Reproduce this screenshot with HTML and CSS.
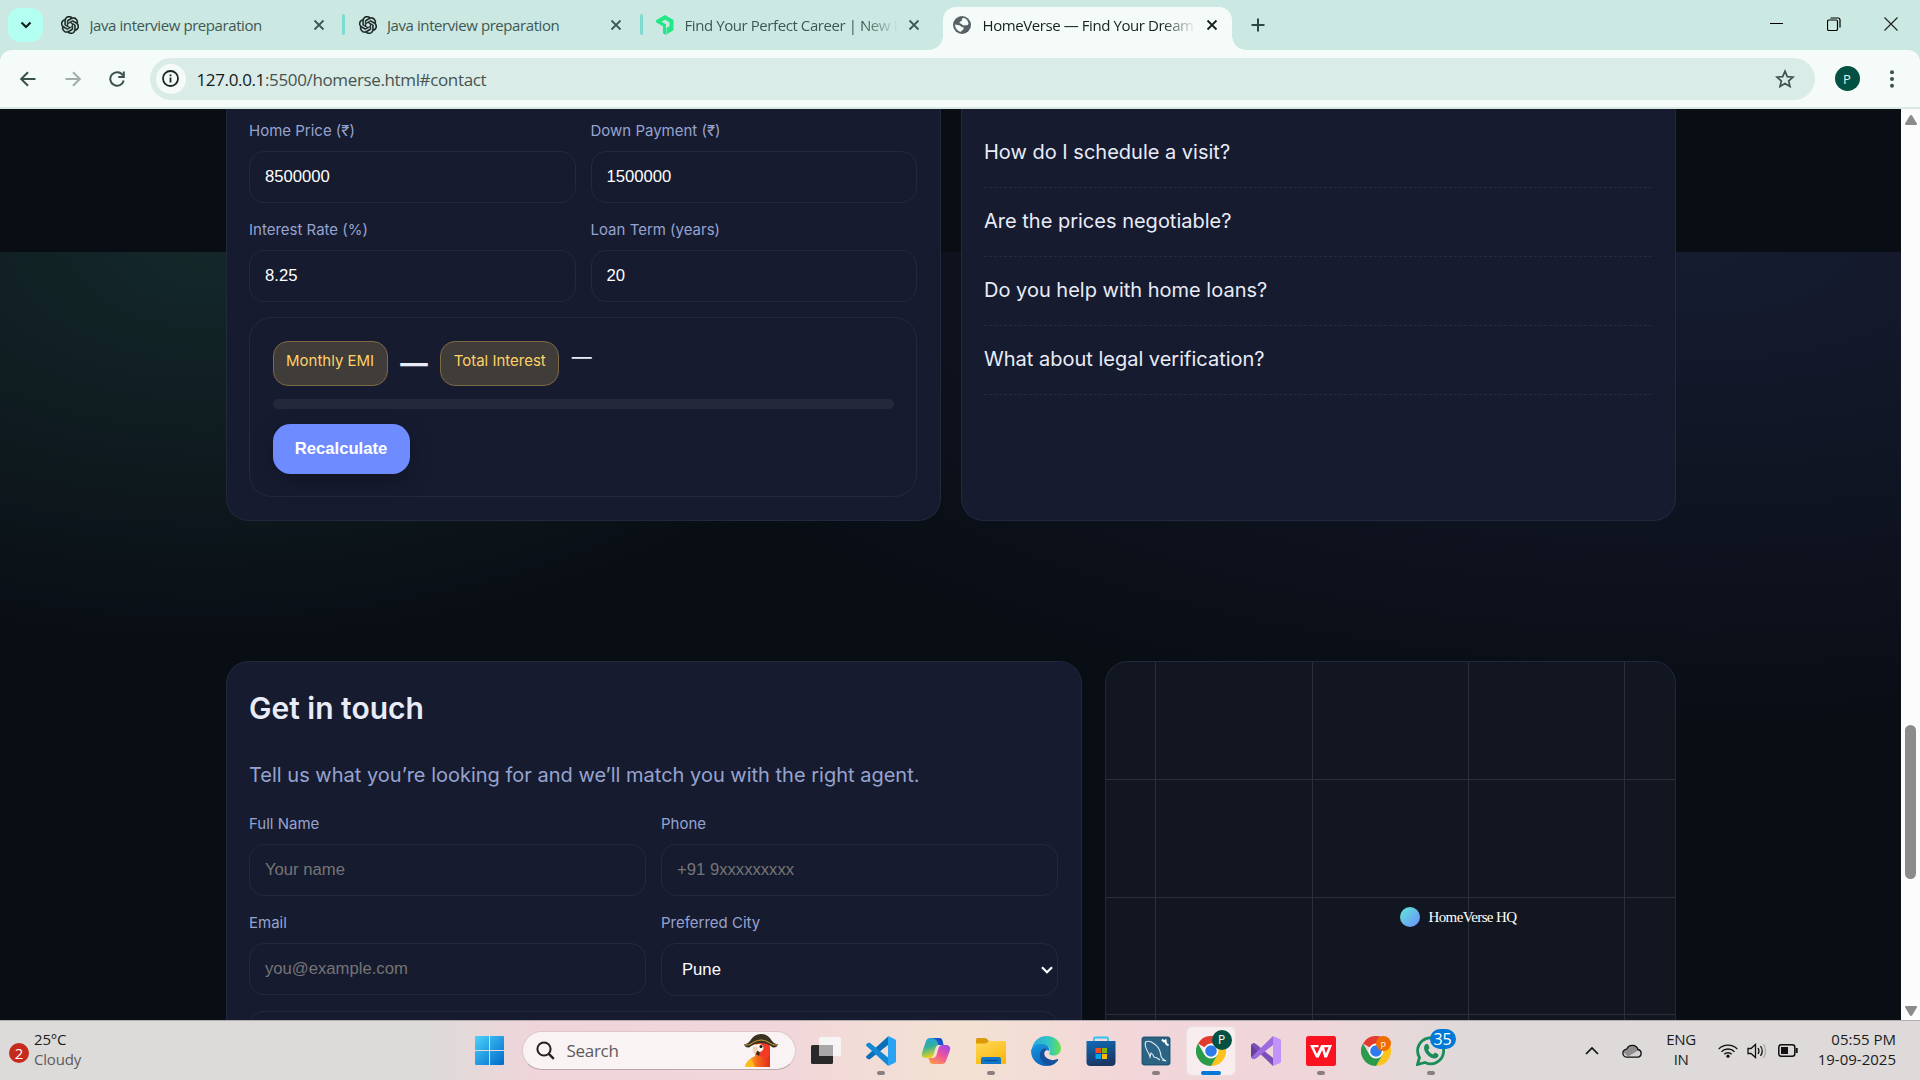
FILE: index.html
```html
<!DOCTYPE html>
<html lang="en">
<head>
<meta charset="utf-8">
<title>HomeVerse — Find Your Dream Home</title>
<link rel="stylesheet" href="styles.css">
</head>
<body>
<svg class="defs" width="0" height="0" aria-hidden="true">
  <defs>
    <symbol id="knot" viewBox="0 0 24 24"><path fill="#111c1b" stroke="#111c1b" stroke-width=".5" d="M22.28 9.82a5.98 5.98 0 0 0-.52-4.91 6.05 6.05 0 0 0-6.51-2.9A6.07 6.07 0 0 0 4.98 4.18a5.98 5.98 0 0 0-4 2.9 6.05 6.05 0 0 0 .74 7.1 5.98 5.98 0 0 0 .51 4.91 6.05 6.05 0 0 0 6.52 2.9A5.98 5.98 0 0 0 13.26 24a6.06 6.06 0 0 0 5.77-4.21 5.99 5.99 0 0 0 4-2.9 6.06 6.06 0 0 0-.75-7.07zm-9.02 12.61a4.48 4.48 0 0 1-2.88-1.04l.14-.08 4.78-2.76a.8.8 0 0 0 .39-.68v-6.74l2.02 1.17a.07.07 0 0 1 .04.05v5.58a4.5 4.5 0 0 1-4.49 4.5zM3.6 18.3a4.47 4.47 0 0 1-.54-3.01l.14.08 4.78 2.76a.77.77 0 0 0 .78 0l5.84-3.37v2.33a.08.08 0 0 1-.03.06L9.74 19.95a4.5 4.5 0 0 1-6.14-1.65zM2.34 7.9a4.49 4.49 0 0 1 2.37-1.98v5.68a.77.77 0 0 0 .39.68l5.81 3.35-2.02 1.17a.08.08 0 0 1-.07 0l-4.83-2.79A4.5 4.5 0 0 1 2.34 7.87zm16.6 3.86-5.84-3.39 2.02-1.16a.08.08 0 0 1 .07 0l4.83 2.79a4.49 4.49 0 0 1-.68 8.1v-5.67a.79.79 0 0 0-.4-.67zm2.01-3.03-.14-.08-4.77-2.78a.78.78 0 0 0-.79 0L9.41 9.23V6.9a.07.07 0 0 1 .03-.06l4.83-2.79a4.5 4.5 0 0 1 6.68 4.66zM8.31 12.86l-2.02-1.16a.08.08 0 0 1-.04-.06V6.07a4.5 4.5 0 0 1 7.38-3.45l-.14.08L8.7 5.46a.8.8 0 0 0-.39.68zm1.09-2.36 2.61-1.5 2.6 1.5v3l-2.6 1.5-2.6-1.5z"/></symbol>
    <symbol id="close" viewBox="0 0 12 12"><path d="M1.5 1.5l9 9M10.5 1.5l-9 9" fill="none" stroke="currentColor" stroke-width="1.8"/></symbol>
    <symbol id="chrome" viewBox="0 0 30 30">
      <path fill="#e33b2e" d="M15 15 2 7.5A15 15 0 0 1 28 7.5H15z"/>
      <path fill="#fcc31e" d="M15 7.5h13A15 15 0 0 1 15 30l6.5-11.2z"/>
      <path fill="#2a9b48" d="M2 7.5A15 15 0 0 0 15 30l6.5-11.2-13 0z"/>
      <circle cx="15" cy="15" r="7.4" fill="#fff"/><circle cx="15" cy="15" r="5.8" fill="#2f7bed"/>
    </symbol>
  </defs>
</svg>

<div class="window">
  <header class="tabstrip">
    <button class="tab-search"><svg width="12" height="8" viewBox="0 0 12 8"><path d="M1.5 1.5 6 6l4.500-4.500" fill="none" stroke="#10201d" stroke-width="2.200"/></svg></button>
    <div class="tabs">
      <div class="tab"><svg class="fav" viewBox="0 0 24 24"><use href="#knot"/></svg><span class="tab-title">Java interview preparation</span><svg class="x"><use href="#close"/></svg></div>
      <div class="tab split"><svg class="fav" viewBox="0 0 24 24"><use href="#knot"/></svg><span class="tab-title">Java interview preparation</span><svg class="x"><use href="#close"/></svg></div>
      <div class="tab split"><svg class="fav green" viewBox="0 0 18 20"><path d="M0 5.200 9 0l8.500 5v10L10.500 19.500V13l3-1.800V7.300L9 4.700 5.500 6.700 10 9.300V20L7 18.200v-7L0 7.200z" fill="#1fe884"/></svg><span class="tab-title fade">Find Your Perfect Career | New Era</span><svg class="x"><use href="#close"/></svg></div>
      <div class="tab active"><svg class="fav" viewBox="0 0 18 18"><circle cx="9" cy="9" r="9" fill="#5a6166"/><path d="M9.500 2c3-.4 6 2.500 6 6-1 2-3 1-4.500 1.500S9.500 8 7.500 7.500 7 5.500 8.500 5z" fill="#f4fbf9"/><path d="M2 8.500c2 .5 4 .2 5.500 1.500s2 1 3 1.500-.5 2.500-1.500 3-.5 1.500-1.500 1.300C4.500 15 2 12 2 8.500z" fill="#f4fbf9"/></svg><span class="tab-title fade">HomeVerse — Find Your Dream Home</span><svg class="x"><use href="#close"/></svg></div>
    </div>
    <svg class="plus" width="14" height="14" viewBox="0 0 14 14"><path d="M7 .5v13M.5 7h13" stroke="#2f4743" stroke-width="2"/></svg>
    <div class="controls">
      <svg width="14" height="14" viewBox="0 0 14 14"><path d="M0 6.500h13" stroke="#000" stroke-width="1"/></svg>
      <svg width="14" height="14" viewBox="0 0 14 14"><rect x=".5" y="3" width="10" height="10.500" rx="1.500" fill="none" stroke="#000" stroke-width="1.200"/><path d="M3.500 1h7.500q2 0 2 2v7.500" fill="none" stroke="#000" stroke-width="1.200"/></svg>
      <svg width="14" height="14" viewBox="0 0 14 14"><path d="M.5.5l13 13M13.500.5l-13 13" stroke="#222" stroke-width="1.200"/></svg>
    </div>
  </header>

  <nav class="toolbar">
    <svg class="nav" viewBox="0 0 16 16"><path d="M15.500 8H1.500M8 1.200 1.200 8 8 14.800" fill="none" stroke="#39524d" stroke-width="2"/></svg>
    <svg class="nav" viewBox="0 0 16 16"><path d="M.5 8h14M8 1.200 14.800 8 8 14.800" fill="none" stroke="#a3adab" stroke-width="2"/></svg>
    <svg class="nav" viewBox="0 0 16 16"><path d="M13.800 4.300A6.800 6.800 0 1 0 14.700 9.500M14.800 .5v5.500H9.300" fill="none" stroke="#39524d" stroke-width="2"/></svg>
    <div class="omnibox">
      <span class="info"><svg width="17" height="17" viewBox="0 0 17 17"><circle cx="8.500" cy="8.500" r="7.500" fill="none" stroke="#1b2625" stroke-width="1.800"/><path d="M8.500 7.500v5M8.500 4.500v1.700" stroke="#1b2625" stroke-width="1.800"/></svg></span>
      <span class="url"><b>127.0.0.1</b>:5500/homerse.html#contact</span>
      <svg class="star" width="20" height="20" viewBox="0 0 20 20"><path d="M10 2.200l2.300 5.400 5.800.5-4.400 3.800 1.300 5.700-5-3-5 3 1.300-5.700L1.900 8.100l5.800-.5z" fill="none" stroke="#44524f" stroke-width="1.700"/></svg>
    </div>
    <span class="avatar">P</span>
    <svg class="dots" width="4" height="18" viewBox="0 0 4 18"><g fill="#39524d"><circle cx="2" cy="2.200" r="2"/><circle cx="2" cy="9" r="2"/><circle cx="2" cy="15.800" r="2"/></g></svg>
  </nav>

  <div class="viewport">
    <main class="page">
      <section class="row halves">
        <div class="card cut-top">
          <div class="fields">
            <label class="field"><span>Home Price (₹)</span><input value="8500000"></label>
            <label class="field"><span>Down Payment (₹)</span><input value="1500000"></label>
            <label class="field"><span>Interest Rate (%)</span><input value="8.25"></label>
            <label class="field"><span>Loan Term (years)</span><input value="20"></label>
          </div>
          <div class="emi">
            <div class="emi-row"><span class="badge">Monthly EMI</span><strong>—</strong><span class="badge">Total Interest</span><span class="dash">—</span></div>
            <div class="bar"></div>
            <button class="btn">Recalculate</button>
          </div>
        </div>
        <div class="card cut-top faq">
          <div class="question">How do I schedule a visit?</div>
          <div class="question">Are the prices negotiable?</div>
          <div class="question">Do you help with home loans?</div>
          <div class="question">What about legal verification?</div>
        </div>
      </section>
      <section class="row contact">
        <div class="card touch">
          <h2>Get in touch</h2>
          <p>Tell us what you’re looking for and we’ll match you with the right agent.</p>
          <div class="fields">
            <label class="field"><span>Full Name</span><input placeholder="Your name"></label>
            <label class="field"><span>Phone</span><input placeholder="+91 9xxxxxxxxx"></label>
            <label class="field"><span>Email</span><input placeholder="you@example.com"></label>
            <div class="field"><span>Preferred City</span><div class="select">Pune<svg width="12" height="8" viewBox="0 0 12 8"><path d="M1 1.200 6 6.200l5-5" fill="none" stroke="#fff" stroke-width="2.200"/></svg></div></div>
          </div>
          <div class="message"></div>
        </div>
        <div class="card map"><div class="pin"><i></i><span>HomeVerse HQ</span></div></div>
      </section>
    </main>
    <aside class="scrollbar">
      <svg width="12" height="10" viewBox="0 0 12 10"><path d="M6 0q.8 0 1.200.8L12 8.800q0 1.200-1 1.200H1q-1 0-1-1.200L4.800.8Q5.200 0 6 0z" fill="#8b8b8b"/></svg>
      <div class="thumb"></div>
      <svg width="12" height="10" viewBox="0 0 12 10"><path d="M6 10q.8 0 1.200-.8L12 1.200Q12 0 11 0H1Q0 0 0 1.200l4.800 8Q5.200 10 6 10z" fill="#8b8b8b"/></svg>
    </aside>
  </div>

  <footer class="taskbar">
    <div class="weather"><span class="count">2</span><div><b>25°C</b><br>Cloudy</div></div>
    <div class="apps">
      <svg class="start" width="29" height="29" viewBox="0 0 29 29"><defs><linearGradient id="w" x2="1" y2="1"><stop stop-color="#4cd2fb"/><stop offset="1" stop-color="#0069ca"/></linearGradient></defs><path fill="url(#w)" d="M1 0h13v14H0V1q0-1 1-1zm14 0h13q1 0 1 1v13H15zM0 15h14v14H1q-1 0-1-1zm15 0h14v13q0 1-1 1H15z"/></svg>
      <div class="search">
        <svg width="19" height="19" viewBox="0 0 19 19"><circle cx="8" cy="8" r="6.600" fill="none" stroke="#222" stroke-width="2"/><path d="M12.800 12.800l5 5" stroke="#222" stroke-width="2.400"/></svg>
        <span>Search</span>
        <svg class="parrot" width="34" height="33" viewBox="0 0 34 33"><defs><linearGradient id="pr" x1="0" y1="0" x2="1" y2="0"><stop stop-color="#ffd02a"/><stop offset=".5" stop-color="#f5681c"/><stop offset="1" stop-color="#e22a18"/></linearGradient></defs><path d="M12 9h13q1 3 1 8v16H1q1-7 10-11z" fill="url(#pr)"/><path d="M13 9h11q3 6 1 14-7 2-11-3z" fill="#f23a24"/><path d="M1 33q1-5 6-8l4 8z" fill="#fbbc1c"/><ellipse cx="15" cy="14" rx="4.500" ry="4" fill="#fff6ea"/><path d="M9 13q5-2 5 3 0 3-4 4-2-3-1-7z" fill="#ead7bb"/><path d="M13 17q4 0 2 5l-3-2z" fill="#39281e"/><circle cx="17" cy="12.500" r="1.500" fill="#1b1512"/><path d="M0 10q3 1 6-3 4-7 11-7t11 7q3 4 6 3-1 4-5 3.500Q17 4.500 5 13.500 1 14 0 10z" fill="#3b3120"/><path d="M1 11q4 1 9-3 7-4 14 0 5 4 9 3" fill="none" stroke="#c9a23b" stroke-width="1"/></svg>
      </div>
      <div class="dock">
        <span class="app"><svg viewBox="0 0 30 30"><rect x="0" y="9" width="22" height="19" rx="1.500" fill="#292929"/><rect x="8" y="1" width="22" height="19" rx="1.500" fill="#f6f4f4"/><path d="M8 9h14v11H9.500Q8 20 8 18.500z" fill="#a9a7a7"/></svg></span>
        <span class="app run"><svg viewBox="0 0 30 30"><path d="M0 20.500 22 .5V9L3.500 23.500 1 22.500q-1-1-1-2z" fill="#0a6fbb"/><path d="M0 9.500q0-1 1-2L3.500 6.500 22 21.500v8.300z" fill="#1389d3"/><path d="M22 0l6.500 3q1.500.7 1.500 2v20q0 1.300-1.500 2L22 30z" fill="#29a3f1"/></svg></span>
        <span class="app"><svg viewBox="0 0 30 30"><defs><linearGradient id="c1" x2=".3" y2="1"><stop stop-color="#1d9fe8"/><stop offset=".5" stop-color="#35b09a"/><stop offset="1" stop-color="#f2d21a"/></linearGradient><linearGradient id="c2" x1=".8" x2=".2" y2="1"><stop stop-color="#a447e8"/><stop offset=".5" stop-color="#f0569b"/><stop offset="1" stop-color="#fd9a48"/></linearGradient></defs><path d="M9 2h9q3 0 3.500 3l1 4h-5q-2 0-3 3l-2 7q-1 3-4 3H4q-4-1-3-5L5 5q1-3 4-3z" fill="url(#c1)"/><path d="M21 28h-9q-3 0-3.500-3l-1-3h4q3 0 4-3l2-7q1-3 4-3h4.500q4 1 3 5L25 25q-1 3-4 3z" fill="url(#c2)"/><path d="M11 2h7q3 0 3.500 3l1 4h-5q-1-6-6.500-7z" fill="#1b51cf"/></svg></span>
        <span class="app run"><svg viewBox="0 0 30 30"><defs><linearGradient id="fl" y2="1" x2=".6"><stop stop-color="#ffd85a"/><stop offset="1" stop-color="#fbb912"/></linearGradient></defs><path d="M0 3.500Q0 2 1.500 2H9q1 0 2 1l2 2v5H0z" fill="#dc9a0a"/><path d="M0 7.500h10l3-2.500h15.500Q30 5 30 6.500V28H0z" fill="url(#fl)"/><path d="M5 28v-5q0-2 2-2h16q2 0 2 2v5z" fill="#0f76c8"/><path d="M8.500 24.500h13" stroke="#0a4f94" stroke-width="1.300"/></svg></span>
        <span class="app"><svg viewBox="0 0 30 30"><defs><linearGradient id="e1"><stop stop-color="#2aa8e6"/><stop offset=".6" stop-color="#31c7c0"/><stop offset="1" stop-color="#6fe04c"/></linearGradient><linearGradient id="e2" y2="1" x2=".4"><stop stop-color="#169ade"/><stop offset="1" stop-color="#0c63bd"/></linearGradient></defs><path d="M1 12C3 4 9 0 15.500 0 24 0 30 6 30 12.500c0 4.500-3.500 7-7 7-4 0-5.500-1.500-4.500-3 2-3-.5-7.500-6-7.500C7 9 3 10 1 12z" fill="url(#e1)"/><path d="M0 15C1 9.500 6 7.500 10.500 8c5 0 8.500 3 8 7-5-3-9 5-3 10 3 2.500 7 2.500 9 2Q21 30 15 30C7 30 0 23.500 0 15z" fill="url(#e2)"/><path d="M11.500 13Q7 18 10 23.500q3 5.500 9 6 5-1 8-5 .8-1.500-.5-1.500-7 3-12-2-3-4 1-8-2-1-4 0z" fill="#15509c"/></svg></span>
        <span class="app"><svg viewBox="0 0 30 30"><defs><linearGradient id="st" y2="1" x2=".3"><stop stop-color="#0e6cb8"/><stop offset="1" stop-color="#1c3563"/></linearGradient></defs><path d="M8 7V2.500Q8 1.500 9 1.500h12q1 0 1 1V7" fill="none" stroke="#2fc4f3" stroke-width="1.800"/><path d="M.5 5h29v21q0 4-4 4h-21q-4 0-4-4z" fill="url(#st)"/><path d="M9.500 12H15v5H9.500z" fill="#f25022"/><path d="M16 12h5v5h-5z" fill="#7fba00"/><path d="M9.500 18H15v5H9.500z" fill="#00a4ef"/><path d="M16 18h5v5h-5z" fill="#ffb900"/></svg></span>
        <span class="app run"><svg viewBox="0 0 30 30"><rect x=".5" y=".5" width="29" height="29" rx="3" fill="#2c6485"/><rect x="1.500" y="1.500" width="27" height="27" rx="2.500" fill="none" stroke="#235472"/><path d="M8 18Q3 10 4.500 6q4-2 7.500 1 7 4 8 13 0 2 5 5l-4-1M8 18l1 3 1-4q2 1 3 4 4 1 6 3" fill="none" stroke="#dfe9ef" stroke-width="1.100"/><path d="M21 3.500l2 2 1.500-1 .5 3 2.500 2" fill="none" stroke="#fff" stroke-width="2"/></svg></span>
        <span class="app on"><svg><use href="#chrome"/></svg><em class="dot-p">P</em></span>
        <span class="app"><svg viewBox="0 0 30 30"><path d="M0 9l3-2 6 6v4l-6 6-3-2z" fill="#63419c"/><path d="M0 9q2-3 5-1l17 14v8L2 11z" fill="#7a4fb8"/><path d="M22 0v9L5 22.500q-3 2-5-1z" fill="#9d6ae0"/><path d="M22 0l7 3q1 .5 1 2v20q0 1.500-1 2l-7 3z" fill="#c193fb"/></svg></span>
        <span class="app run"><svg viewBox="0 0 30 30"><rect width="30" height="30" rx="2.500" fill="#fb1220"/><path d="M4 9h8.500v2.300H7.800L11 18l4.200-9h2.300l2.300 8.500 2.700-6.200H17.500V9H26l-5 12.500h-2.600l-2.200-7.500-3.500 7.500H10z" fill="#fff"/></svg></span>
        <span class="app"><svg><use href="#chrome"/></svg><em class="dot-o">P</em></span>
        <span class="app run"><svg viewBox="0 0 30 30"><path d="M1.500 28.500l2-7A13 13 0 1 1 9 26.500z" fill="none" stroke="#1a8c58" stroke-width="2.800"/><path d="M10 8l2 0 1.500 4-1.500 2q1.500 3 5 4.500l2-2 3.500 2q0 4-4.500 4C13 22 8 16 8 12q0-3 2-4z" fill="#1a8c58"/></svg><em class="count-b">35</em></span>
      </div>
    </div>
    <div class="tray">
      <svg width="14" height="9" viewBox="0 0 14 9"><path d="M1 8l6-6 6 6" fill="none" stroke="#111" stroke-width="1.700"/></svg>
      <svg class="cloud" width="21" height="15" viewBox="0 0 21 15"><path d="M5 14.200a4 4 0 0 1-.3-8A6 6 0 0 1 16 6.500a4 4 0 0 1 .5 7.700z" fill="#d4d2d2"/><path d="M1 9q1-3 4-3a6 6 0 0 1 10-2q1 2 2 3L6 13.500z" fill="#8f8d8d"/><path d="M5 14.200a4 4 0 0 1-.3-8A6 6 0 0 1 16 6.500a4 4 0 0 1 .5 7.700z" fill="none" stroke="#111" stroke-width="1.300"/></svg>
      <div class="lang">ENG<br>IN</div>
      <svg class="wifi" width="20" height="15" viewBox="0 0 20 15"><g fill="none" stroke="#111" stroke-width="1.300"><path d="M.7 6a13 13 0 0 1 18.600 0M3.500 8.700a9.200 9.200 0 0 1 13 0M6.300 11.300a5.200 5.200 0 0 1 7.400 0"/></g><circle cx="10" cy="13.200" r="1.600" fill="#111"/></svg>
      <svg class="vol" width="20" height="16" viewBox="0 0 20 16"><g fill="none" stroke="#111" stroke-width="1.300"><path d="M1 5.500h3L8.500 1.500v13L4 10.500H1z"/><path d="M11 5q2 3 0 6M13.500 3q3.500 5 0 10"/><path d="M16.500 1q4 7 0 14" stroke="#aaa"/></g></svg>
      <svg class="bat" width="20" height="13" viewBox="0 0 20 13"><rect x=".8" y=".8" width="16" height="11.400" rx="2.500" fill="none" stroke="#111" stroke-width="1.500"/><rect x="3" y="3" width="7" height="7" fill="#111"/><path d="M18.700 4v5" stroke="#111" stroke-width="2"/></svg>
      <div class="clock">05:55 PM<br>19-09-2025</div>
    </div>
  </footer>
</div>
</body>
</html>
```
FILE: styles.css
```css
* { box-sizing: border-box; }
body { margin: 0; background: #090d14; overflow: hidden; }
.defs { position: absolute; }
svg { display: block; flex: none; }
.window { width: 1920px; height: 1080px; display: flex; flex-direction: column; background: #cce8e2; font-family: "Open Sans", "Noto Sans", sans-serif; }

/* tab strip */
.tabstrip { height: 50px; display: flex; padding-left: 8px; }
.tab-search { width: 35px; height: 34px; margin-top: 8px; border: 0; padding: 0; border-radius: 12px; background: #b3fff2; display: grid; place-items: center; }
.tabs { display: flex; margin-left: 3px; }
.tab { width: 297.500px; display: flex; align-items: center; padding: 0 19px 0 15px; color: #3f5853; position: relative; }
.tab.split::before { content: ""; position: absolute; left: -1.500px; top: 14px; width: 3px; height: 21px; border-radius: 2px; background: #7ddbd0; }
.fav { width: 18px; height: 18px; }
.fav.green { height: 20px; }
.tab-title { flex: 1; margin-left: 10.500px; font-size: 15px; letter-spacing: -.42px; line-height: 22px; white-space: nowrap; overflow: hidden; }
.tab-title.fade { -webkit-mask-image: linear-gradient(90deg, #000 84%, transparent 100%); mask-image: linear-gradient(90deg, #000 84%, transparent 100%); margin-right: 10px; }
.x { width: 12px; height: 12px; }
.tab.active { color: #16211f; width: 289px; margin: 7px 0 0 4px; padding: 0 14px 7px 10px; background: #f5fbf9; border-radius: 13px 13px 0 0; }
.tab.active::before, .tab.active::after { content: ""; position: absolute; bottom: 0; width: 14px; height: 14px; }
.tab.active::before { left: -14px; background: radial-gradient(circle at 0 0, transparent 13.500px, #f5fbf9 14px); }
.tab.active::after { right: -14px; background: radial-gradient(circle at 100% 0, transparent 13.500px, #f5fbf9 14px); }
.tab.active .tab-title { margin-left: 12px; }
.plus { margin: 18px 0 0 19px; }
.controls { display: flex; gap: 43px; margin: 17px 22px 0 auto; }

/* toolbar */
.toolbar { height: 59px; background: #f5fbf9; border-bottom: 2px solid #d9e8e2; border-radius: 12px 12px 0 0; display: flex; align-items: center; padding-left: 20px; }
.nav { width: 16px; height: 16px; margin-right: 28.500px; }
.omnibox { width: 1665px; height: 42px; margin-left: -4px; border-radius: 21px; background: #daece8; display: flex; align-items: center; padding: 0 20px 0 6px; }
.info { width: 30px; height: 30px; border-radius: 50%; background: #f5fbf9; display: grid; place-items: center; }
.url { margin-left: 11px; padding-top: 2px; font-size: 17px; letter-spacing: -.36px; color: #47534f; flex: 1; }
.url b { font-weight: 400; color: #111b19; }
.avatar { width: 25px; height: 25px; margin-left: 20px; border-radius: 50%; background: #035143; color: #e5f2ef; font-size: 13px; display: grid; place-items: center; }
.dots { margin-left: 30px; }

/* page */
.viewport { height: 911px; display: flex; overflow: hidden; }
.page {
  width: 1901px; padding: 0 225.500px; overflow: hidden;
  font: 20px/1.6 Inter, sans-serif; color: #e8ecf7;
  background:
    radial-gradient(ellipse 740px 410px at 205px 0, rgba(90, 220, 190, .13), transparent) 0 143px no-repeat,
    radial-gradient(ellipse 1150px 480px at 1700px 0, rgba(115, 135, 255, .12), transparent) 0 143px no-repeat,
    #090d14;
}
.row { display: grid; }
.halves { grid-template-columns: 1fr 1fr; gap: 20px; height: 411.500px; }
.card { border: 1px solid #22283d; border-radius: 22.500px; background: #161b30; padding: 22.500px; }
.cut-top { border-top: 0; border-radius: 0 0 22.500px 22.500px; padding-top: 11.500px; }
.fields { display: grid; grid-template-columns: 1fr 1fr; gap: 16.500px 15px; align-items: start; }
.field { display: grid; gap: 10.500px; min-width: 0; }
.field > span { font-size: 15px; line-height: 20px; color: #97a3cf; }
input, .select { width: 100%; height: 52px; border: 1px solid #23283c; border-radius: 15px; background: transparent; padding: 0 15px; color: #fff; font: 16.670px "Liberation Sans", Arial, sans-serif; }
input::placeholder { color: #757575; }
.select { display: flex; align-items: center; justify-content: space-between; height: 53px; padding: 0 4px 0 20px; }
.emi { margin-top: 15px; height: 180px; border: 1px solid #23283c; border-radius: 22.500px; padding: 22.500px; }
.emi-row { display: flex; gap: 12.500px; height: 45px; }
.badge { border: 1px solid #7c6a43; background: #403c3a; color: #ffd166; border-radius: 15px; padding: 6px 12.500px 0; font-size: 15px; line-height: 25px; white-space: nowrap; }
.emi-row strong { font-size: 27.500px; line-height: 44px; font-weight: 700; }
.dash { line-height: 32px; }
.bar { height: 10px; margin-top: 13px; border-radius: 5px; background: #23283b; }
.btn { display: block; margin-top: 15px; height: 50px; width: 137px; padding: 0; border: 0; border-radius: 17.500px; background: #6e8cff; color: #fff; font: bold 16.670px "Liberation Sans", Arial, sans-serif; box-shadow: 0 7px 22px rgba(0, 0, 0, .25); }
.faq { padding-top: 10px; }
.question { height: 69px; line-height: 66px; border-bottom: 1px dashed #252a3e; }

.contact { grid-template-columns: 856px 571px; justify-content: space-between; margin-top: 140.500px; height: 480px; }
.touch h2 { margin: -1px 0 0; font-size: 30px; line-height: 48px; font-weight: 600; }
.touch p { margin: 27px 0 23px; line-height: 32px; color: #97a3cf; white-space: nowrap; }
.message { margin-top: 15px; height: 120px; border: 1px solid #23283c; border-radius: 15px; }
.map {
  padding: 0; position: relative;
  background:
    repeating-linear-gradient(90deg, transparent 0 155.300px, #2b2f3a 155.300px 156.300px) -106px 0,
    repeating-linear-gradient(transparent 0 116.300px, #2b2f3a 116.300px 117.300px) 0 1px,
    #121620;
  background-size: 700px 100%, 100% 100%, auto;
}
.pin { position: absolute; left: 294px; top: 245px; display: flex; align-items: center; gap: 9px; font: 15px/20px "Liberation Serif", serif; letter-spacing: -.62px; color: #fff; white-space: nowrap; }
.pin i { width: 20px; height: 20px; border-radius: 50%; background: linear-gradient(135deg, #5eead4, #6e8cff); }

.scrollbar { width: 19px; background: #fcfcfc; display: flex; flex-direction: column; align-items: center; padding: 6px 0 4px; }
.thumb { width: 11px; height: 154px; margin: 600px 0 auto; border-radius: 6px; background: #8b8b8b; }

/* taskbar */
.taskbar {
  height: 60px; border-top: 1px solid #b3abad; display: flex; align-items: center; color: #1c1c1c; font-size: 15px; line-height: 20px; letter-spacing: -.2px;
  background: linear-gradient(90deg, #dddbd9 0 430px, #efd5d9 530px, #f1d7da 790px, #f3e2d3 960px, #f2d6d9 1130px, #eed6d9 1330px, #dddad9 1480px);
}
.weather { width: 474.500px; display: flex; align-items: center; gap: 5px; padding: 0 0 4px 9px; color: #5c5b5b; }
.weather b { font-weight: 400; color: #1c1c1c; }
.count { width: 20px; height: 20px; margin-top: 9px; border-radius: 50%; background: #c42b1c; color: #fff; display: grid; place-items: center; }
.apps { display: flex; align-items: center; }
.search { width: 274px; height: 39px; margin-left: 18px; border-radius: 20px; background: #f9f3f4; border: 1px solid #dcc8cb; border-bottom-color: #b9a7aa; display: flex; align-items: center; padding: 0 17px 0 13px; font-size: 17px; letter-spacing: -.3px; color: #5e5b5c; }
.search span { margin-left: 12px; flex: 1; }
.dock { display: flex; gap: 7px; margin-left: 6px; }
.app { width: 48px; height: 48px; position: relative; display: grid; place-items: center; border-radius: 5px; }
.app svg { width: 30px; height: 30px; }
.app.run::after { content: ""; position: absolute; bottom: 0; left: 20px; width: 8px; height: 4px; border-radius: 2px; background: #8a7f80; }
.app.on { background: #f7ecee; box-shadow: 0 0 0 1px #ecdcdf; }
.app.on::after { content: ""; position: absolute; bottom: 0; left: 14px; width: 20px; height: 4px; border-radius: 2px; background: #0078d7; }
.app em { position: absolute; font-style: normal; display: grid; place-items: center; color: #fff; }
.dot-p { width: 20px; height: 20px; right: 3px; top: 3px; border-radius: 50%; background: #035143; font-size: 12px; }
.dot-o { width: 15px; height: 15px; right: 9px; top: 9px; border-radius: 50%; background: #ef6c00; font-size: 9px; }
.count-b { width: 26px; height: 20px; right: -1px; top: 2px; border-radius: 10px; background: #0078d7; font-size: 16px; }
.tray { margin-left: auto; margin-right: 24px; display: flex; align-items: center; }
.cloud { margin-left: 23px; }
.lang { margin-left: 23px; padding-bottom: 3px; width: 30px; text-align: center; letter-spacing: -.4px; }
.wifi { margin-left: 22px; }
.vol { margin-left: 9px; }
.bat { margin-left: 11px; }
.clock { width: 98px; padding-bottom: 3px; text-align: right; letter-spacing: 0; }
```
